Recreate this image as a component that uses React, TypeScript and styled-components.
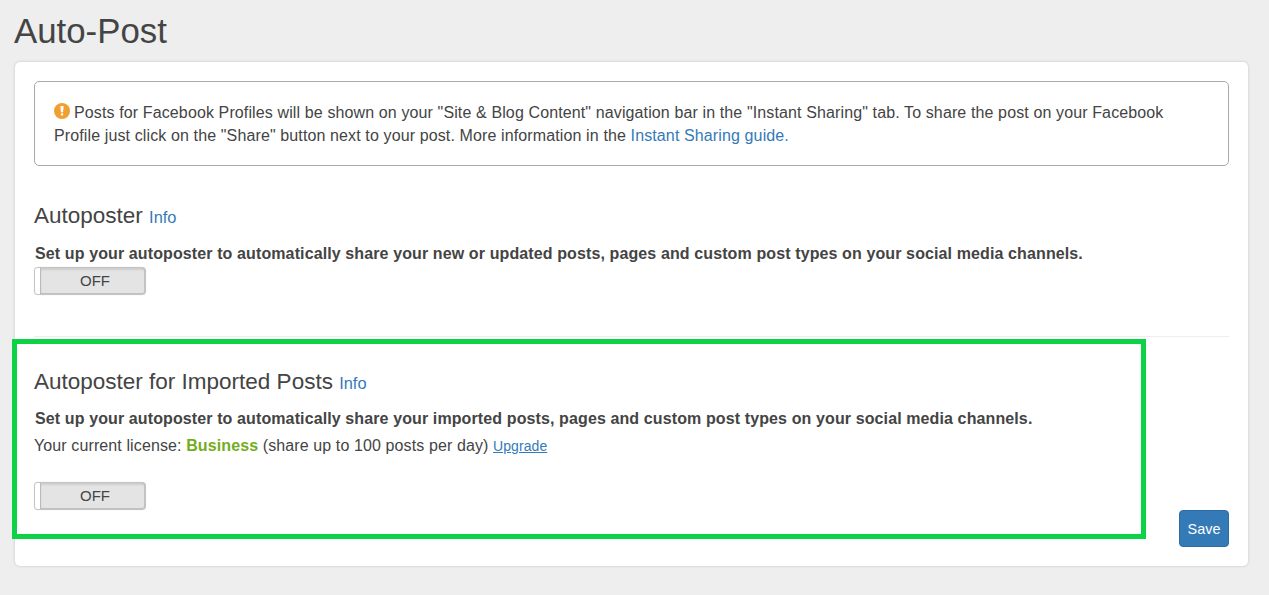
import React from "react";
import styled, { createGlobalStyle } from "styled-components";

const Global = createGlobalStyle`
  html, body { margin: 0; padding: 0; background: #eeeeee; }
  body { font-family: "Liberation Sans", Arial, sans-serif; color: #444; overflow: hidden; }
`;

const Page = styled.div`
  position: relative;
  width: 1269px;
  height: 595px;
  padding: 0 21px 0 15px;
  box-sizing: border-box;
`;

const Title = styled.h1`
  margin: 0 0 0 -1px;
  height: 62px;
  font-size: 34.8px;
  line-height: 61px;
  font-weight: 400;
  color: #444;
`;

const Card = styled.main`
  height: 504px;
  box-sizing: border-box;
  background: #fff;
  border-radius: 5px;
  box-shadow: 0 0 3px rgba(0, 0, 0, 0.18);
  padding: 19px;
  display: flex;
  flex-direction: column;
`;

const Alert = styled.div`
  height: 85px;
  box-sizing: border-box;
  border: 1px solid #aaa;
  border-radius: 5px;
  padding: 19px 19px 0;
  font-size: 16px;
  line-height: 23px;
  letter-spacing: 0.122px;
  color: #444;
`;

const AlertIcon = styled.svg`
  width: 16px;
  height: 16px;
  vertical-align: -1px;
  margin-right: 4px;
`;

const Link = styled.a`
  color: #337ab7;
  text-decoration: none;
`;

const Section = styled.section<{ $height: number; $top: number }>`
  height: ${(p) => p.$height}px;
  padding-top: ${(p) => p.$top}px;
  box-sizing: border-box;
`;

const Heading = styled.h2`
  margin: 0;
  font-size: 22.5px;
  line-height: 30px;
  font-weight: 400;
  color: #444;
`;

const InfoLink = styled(Link)`
  font-size: 16.4px;
`;

const Lead = styled.p<{ $top: number; $bottom: number }>`
  margin: ${(p) => p.$top}px 0 ${(p) => p.$bottom}px 1px;
  font-size: 16px;
  line-height: 22px;
  font-weight: 700;
  letter-spacing: 0.113px;
  color: #444;
`;

const License = styled.p`
  margin: 5px 0 25px;
  font-size: 16px;
  line-height: 22px;
  letter-spacing: 0.11px;
  color: #444;
`;

const Plan = styled.strong`
  color: #73ad21;
`;

const Upgrade = styled(Link)`
  font-size: 14px;
  letter-spacing: 0.08px;
  text-decoration: underline;
`;

const Toggle = styled.div`
  width: 112px;
  height: 28px;
  box-sizing: border-box;
  border: 1px solid #c4c4c4;
  border-radius: 4px;
  display: flex;
  overflow: hidden;
  background: #e4e4e4;
  box-shadow: inset 0 -1px 0 #c0c0c0, inset -1px 0 0 #c8c8c8, 0 0 1px rgba(0, 0, 0, 0.2);
`;

const Knob = styled.span`
  width: 5px;
  background: #fff;
  border-right: 1px solid #bbb;
`;

const ToggleLabel = styled.span`
  flex: 1;
  padding-left: 4px;
  text-align: center;
  font-size: 15px;
  line-height: 25px;
  color: #444;
  box-shadow: inset 0 2px 2px rgba(0, 0, 0, 0.1);
`;

const Rule = styled.hr`
  margin: 0;
  border: 0;
  border-top: 1px solid #eee;
`;

const Footer = styled.div`
  display: flex;
  justify-content: flex-end;
  height: 37px;
`;

const Save = styled.button`
  width: 50px;
  height: 37px;
  padding: 0;
  border: 1px solid #2e6da4;
  border-radius: 4px;
  background: #337ab7;
  color: #fff;
  font-family: inherit;
  font-size: 14.4px;
`;

const Highlight = styled.div`
  position: absolute;
  left: 12px;
  top: 339px;
  width: 1134px;
  height: 200px;
  box-sizing: border-box;
  border: 5px solid #0bd345;
  pointer-events: none;
`;

function OffToggle() {
  return (
    <Toggle>
      <Knob />
      <ToggleLabel>OFF</ToggleLabel>
    </Toggle>
  );
}

export default function App() {
  return (
    <Page>
      <Global />
      <Title>Auto-Post</Title>
      <Card>
        <Alert>
          <AlertIcon viewBox="0 0 16 16" aria-hidden="true">
            <circle cx="8" cy="8" r="8" fill="#f0a030" />
            <path d="M6.4 3h3.2l-.5 6.2H6.9z" fill="#fff" />
            <rect x="6.9" y="10.2" width="2.2" height="2.4" rx="0.4" fill="#fff" />
          </AlertIcon>
          Posts for Facebook Profiles will be shown on your "Site &amp; Blog Content" navigation bar in the "Instant Sharing" tab. To share the post on your Facebook Profile just click on the "Share" button next to your post. More information in the <Link href="#">Instant Sharing guide.</Link>
        </Alert>
        <Section $height={171} $top={35}>
          <Heading>
            Autoposter <InfoLink href="#">Info</InfoLink>
          </Heading>
          <Lead $top={11} $bottom={2}>Set up your autoposter to automatically share your new or updated posts, pages and custom post types on your social media channels.</Lead>
          <OffToggle />
        </Section>
        <Rule />
        <Section $height={173} $top={30}>
          <Heading>
            Autoposter for Imported Posts <InfoLink href="#">Info</InfoLink>
          </Heading>
          <Lead $top={10} $bottom={0}>Set up your autoposter to automatically share your imported posts, pages and custom post types on your social media channels.</Lead>
          <License>
            Your current license: <Plan>Business</Plan> (share up to 100 posts per day) <Upgrade href="#">Upgrade</Upgrade>
          </License>
          <OffToggle />
        </Section>
        <Footer>
          <Save>Save</Save>
        </Footer>
      </Card>
      <Highlight />
    </Page>
  );
}
